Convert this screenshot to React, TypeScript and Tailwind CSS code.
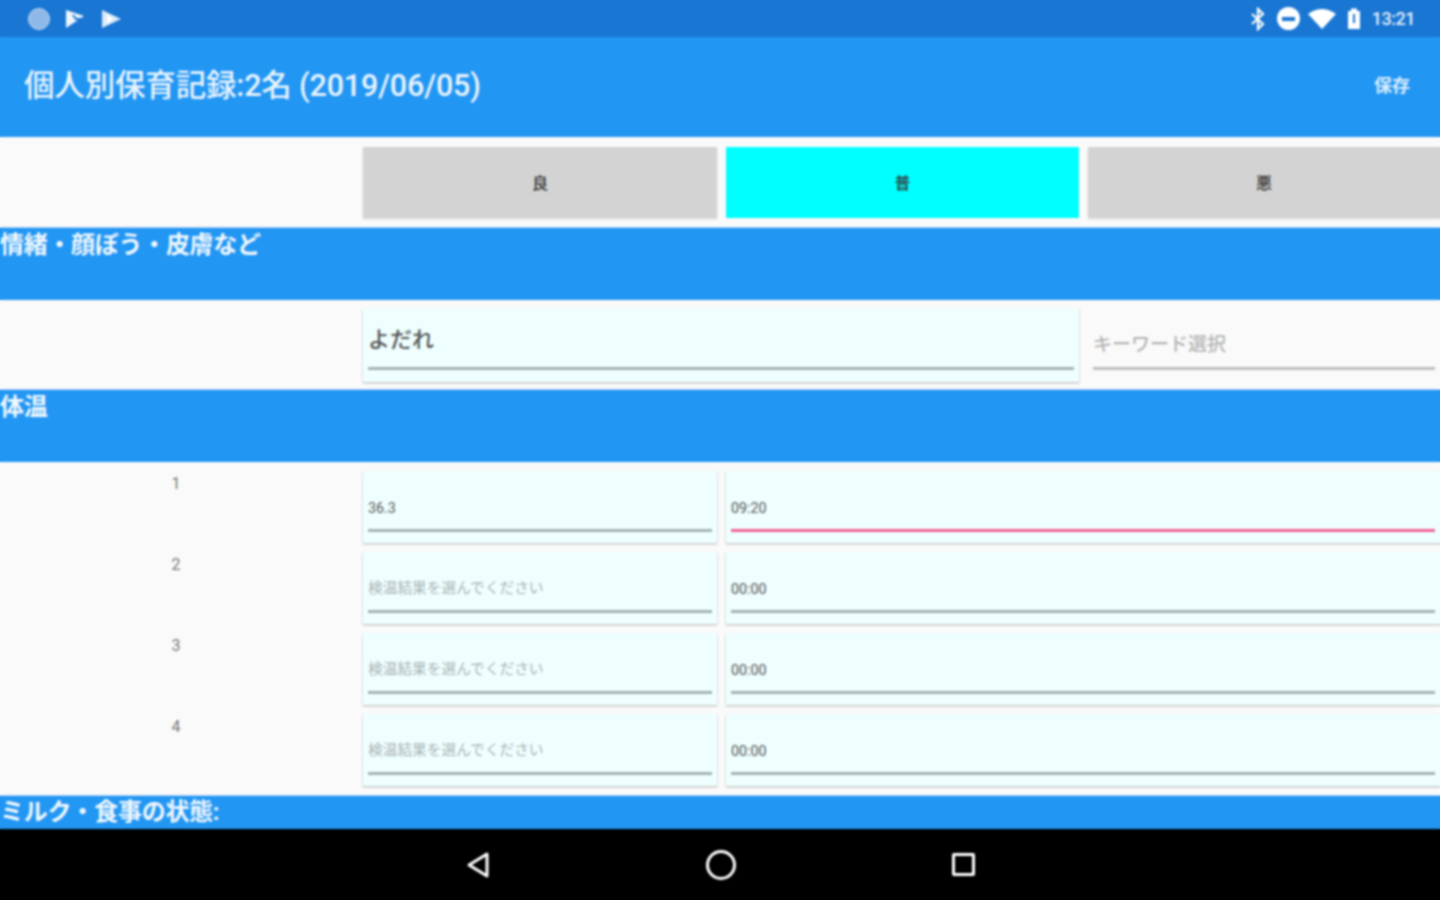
const font = "font-['Roboto','Noto_Sans_CJK_JP',sans-serif]";

const rows = [
  { n: '1', temp: '36.3', time: '09:20', active: true },
  { n: '2', temp: '', time: '00:00', active: false },
  { n: '3', temp: '', time: '00:00', active: false },
  { n: '4', temp: '', time: '00:00', active: false },
];

function StatusBar() {
  return (
    <div className="h-[37px] shrink-0 bg-[#1976d2] flex items-center justify-between pl-[28px] pr-[25px]">
      <div className="flex items-center gap-[16px]">
        <div className="w-[22px] h-[22px] rounded-full bg-[#8db8e8] border border-[#c4daf3]" />
        <svg width="20" height="20" viewBox="0 0 20 20" className="ml-[-1px]">
          <path d="M1 1 L19 7 L1 19 Z" fill="#eef5fc" />
          <path d="M8 6 L11 10 L18 10" fill="none" stroke="#1976d2" strokeWidth="2" />
        </svg>
        <svg width="20" height="20" viewBox="0 0 20 20">
          <path d="M1 1 L20 10 L1 19 Z" fill="#dbe9f8" />
          <path d="M6 5 L6 15 L12 10 Z" fill="#ffffff" />
        </svg>
      </div>
      <div className="flex items-center">
        <svg width="16" height="24" viewBox="0 0 16 24" fill="none" stroke="#fff" strokeWidth="2.2">
          <path d="M2 7 L13 17 L8 22 L8 2 L13 7 L2 17" />
        </svg>
        <div className="ml-[11px] w-[23px] h-[23px] rounded-full bg-white flex items-center justify-center">
          <div className="w-[13px] h-[4px] bg-[#1976d2]" />
        </div>
        <svg width="28" height="20" viewBox="0 0 28 20" className="ml-[8px]">
          <path d="M0 5 Q14 -5 28 5 L14 20 Z" fill="#fff" />
        </svg>
        <svg width="14" height="22" viewBox="0 0 14 22" className="ml-[11px]">
          <path d="M1 3 H4 V0.5 H10 V3 H13 V21 H1 Z" fill="#fff" />
          <path d="M7 6 V15" stroke="#1976d2" strokeWidth="2" />
        </svg>
        <span className={`${font} ml-[11px] text-[18px] font-medium text-[#e4effa] tracking-[-0.5px]`}>13:21</span>
      </div>
    </div>
  );
}

function AppBar() {
  return (
    <div className="h-[100px] shrink-0 bg-[#2196f3] flex items-center justify-between pl-[24px] pr-[30px] pb-[2px]">
      <span className={`${font} text-[30.5px] font-medium text-[#eaf4fe] tracking-[-0.17px]`}>個人別保育記録:2名 (2019/06/05)</span>
      <span className={`${font} text-[18px] font-bold text-[#dcedfc] pb-[2px]`}>保存</span>
    </div>
  );
}

function SectionHeader({ title, short }: { title: string; short?: boolean }) {
  return (
    <div className={`${short ? 'h-[33px]' : 'h-[72px]'} shrink-0 bg-[#2196f3] shadow-[0_-1px_0_#a9cdf0]`}>
      <span className={`${font} block text-[24px] ${short ? 'leading-[33px]' : 'leading-[35px]'} font-bold text-[#f2f8fe] tracking-[-0.3px]`}>{title}</span>
    </div>
  );
}

function Choice({ label, selected, className }: { label: string; selected?: boolean; className: string }) {
  return (
    <div className={`${className} ${selected ? 'bg-[#00ffff]' : 'bg-[#d3d3d3] shadow-[0_1px_2px_rgba(0,0,0,0.15)]'} h-[71px] pt-[2px] flex items-center justify-center`}>
      <span className={`${font} text-[16px] font-medium text-[#333]`}>{label}</span>
    </div>
  );
}

function Field({ value, placeholder, active, className }: { value?: string; placeholder?: string; active?: boolean; className: string }) {
  return (
    <div className={`${className} h-[72px] bg-[#efffff] shadow-[0_1px_2px_rgba(0,0,0,0.3)] px-[5px] pt-[26px]`}>
      <div className={`${font} h-[32px] ${value ? 'text-[14.3px] leading-[22px] text-[#555]' : 'text-[14.7px] leading-[20px] text-[#a8b2b2]'}`}>
        {value || placeholder}
      </div>
      <div className={`h-[3px] ${active ? 'bg-[#f06292]' : 'bg-[#a3b3b0]'}`} />
    </div>
  );
}

export default function App() {
  return (
    <div className="relative h-[900px] w-[1440px] overflow-hidden flex flex-col bg-[#fafafa]">
      <StatusBar />
      <AppBar />

      <div className="h-[91px] shrink-0 pl-[363px] pt-[10px] flex gap-[9px]">
        <Choice className="w-[354px]" label="良" />
        <Choice className="w-[353px]" label="普" selected />
        <Choice className="w-[352px]" label="悪" />
      </div>

      <SectionHeader title="情緒・顔ぼう・皮膚など" />

      <div className="h-[90px] shrink-0 pl-[363px] pt-[9px] flex">
        <div className="w-[716px] h-[73px] bg-[#efffff] shadow-[0_1px_2px_rgba(0,0,0,0.3)] px-[5px] pt-[14px]">
          <div className={`${font} h-[44px] text-[22px] font-medium leading-[34px] text-[#555]`}>よだれ</div>
          <div className="h-[3px] bg-[#a3b3b0]" />
        </div>
        <div className="flex-1 pl-[14px] pr-[5px] pt-[20px]">
          <div className={`${font} h-[38px] text-[19px] font-medium leading-[32px] text-[#b4b4b4]`}>キーワード選択</div>
          <div className="h-[3px] bg-[#bdbdbd]" />
        </div>
      </div>

      <SectionHeader title="体温" />

      <div className="flex flex-col gap-[9px] pt-[9px] h-[334px] shrink-0">
        {rows.map((row) => (
          <div key={row.n} className="flex shrink-0">
            <div className={`${font} w-[363px] shrink-0 text-center text-[16px] leading-[24px] pt-[1px] text-[#777] pr-[11px]`}>{row.n}</div>
            <Field className="w-[354px] shrink-0" value={row.temp} placeholder="検温結果を選んでください" />
            <Field className="flex-1 ml-[9px]" value={row.time} active={row.active} />
          </div>
        ))}
      </div>

      <SectionHeader title="ミルク・食事の状態:" short />

      <div className="flex-1 bg-black flex items-center justify-center">
        <div className="flex items-center gap-[216px] ml-[1px]">
          <svg width="24" height="28" viewBox="0 0 24 28" fill="none" stroke="#fff" strokeWidth="3" strokeLinejoin="round">
            <path d="M21 3 L3 14 L21 25 Z" />
          </svg>
          <div className="w-[30px] h-[30px] rounded-full border-[3px] border-white" />
          <div className="w-[23px] h-[23px] rounded-[2px] border-[3px] border-white" />
        </div>
      </div>

      {/* the reference is an upscaled capture, so everything is slightly soft */}
      <div className="absolute inset-0 pointer-events-none backdrop-blur-[0.8px]" />
    </div>
  );
}
